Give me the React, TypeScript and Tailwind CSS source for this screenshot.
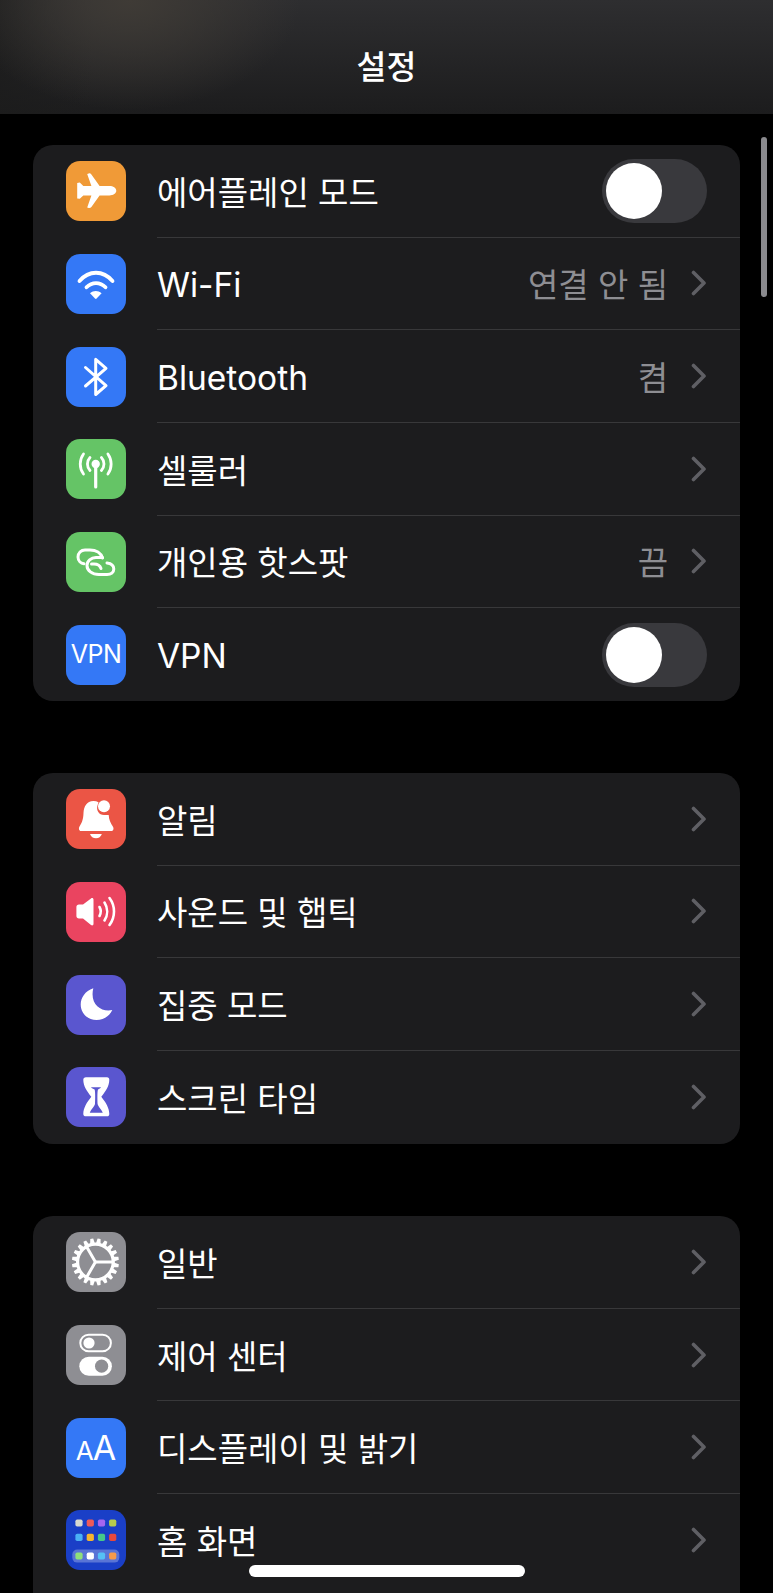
import React from "react";

const Chevron = () => (
  <svg width="16" height="26" viewBox="0 0 16 26" className="shrink-0 mr-[-1px]" fill="none">
    <path d="M2.5 2.5 L13 13 L2.5 23.5" stroke="#5f5f64" strokeWidth="3.6" strokeLinecap="round" strokeLinejoin="round" />
  </svg>
);

const Toggle = () => (
  <div className="relative w-[105px] h-[64px] rounded-full bg-[#39393d] shrink-0 mr-[-1px]">
    <div className="absolute left-[4px] top-[4px] w-[56px] h-[56px] rounded-full bg-white" />
  </div>
);

const Svg = ({ children }: { children: React.ReactNode }) => (
  <svg width="60" height="60" viewBox="0 0 60 60" fill="none">
    {children}
  </svg>
);

const Plane = () => (
  <Svg>
    <path
      fill="#fff"
      d="M50.3 29.7C50.3 27 47 25 43.5 25H33.6L25.4 13.4C24.8 12.6 23.8 12.2 22.8 12.4L21.2 13L25.4 25H17.3L13.8 21.6L11.2 22V37.4L13.8 37.8L17.3 34.4H25.4L21.2 46.4L22.8 47C23.8 47.2 24.8 46.8 25.4 46L33.6 34.4H43.5C47 34.4 50.3 32.4 50.3 29.7Z"
    />
  </Svg>
);
const Wifi = () => (
  <Svg>
    <path d="M13.5 27C23 16 37 16 46.5 27" stroke="#fff" strokeWidth="3.8" strokeLinecap="round" />
    <path d="M20.5 33.3C26 27.6 34 27.6 39.5 33.3" stroke="#fff" strokeWidth="3.8" strokeLinecap="round" />
    <path fill="#fff" d="M24 39.2C27.5 36.4 32 36.4 35.6 39.2L30.6 44.6C30.2 45 29.4 45 29 44.6Z" />
  </Svg>
);
const Bluetooth = () => (
  <Svg>
    <path
      d="M19.5 20.5L40 38.7L29.7 47.5V12.3L40 21.3L19.5 39"
      stroke="#fff"
      strokeWidth="3"
      strokeLinecap="round"
      strokeLinejoin="round"
    />
  </Svg>
);
const Antenna = () => (
  <Svg>
    <path d="M29.7 25V48" stroke="#fff" strokeWidth="3.2" strokeLinecap="round" />
    <circle cx="29.7" cy="25" r="4.2" fill="#fff" />
    <g stroke="#fff" strokeWidth="2.8" strokeLinecap="round">
      <path d="M24 18.5A9.5 9.5 0 0 0 24 31.5" />
      <path d="M35.4 18.5A9.5 9.5 0 0 1 35.4 31.5" />
      <path d="M17.5 15A17 17 0 0 0 17.5 35" />
      <path d="M41.9 15A17 17 0 0 1 41.9 35" />
    </g>
  </Svg>
);
const Hotspot = () => (
  <Svg>
    <g stroke="#fff" strokeWidth="3" strokeLinecap="round" strokeLinejoin="round">
      <path d="M36.5 26C35 21 30 18 24 18H19C15 18 12 21 12 25C12 29 15 31.5 18 31.8" />
      <path d="M25.5 32H28C31.5 32 34 33.5 35 36.5" />
      <path d="M41 31C45 31.5 47.8 33.5 47.8 37C47.8 40.5 45 42.5 41 42.5H33C26 42.5 21 38.5 21 33.5C21 29 25 25.5 30 25.5H36.5" />
    </g>
  </Svg>
);
const Vpn = () => (
  <span className="text-white text-[25px] leading-none tracking-[-0.5px] font-['Inter',sans-serif]">VPN</span>
);
const Bell = () => (
  <Svg>
    <path
      fill="#fff"
      d="M27.5 12C20.5 12 17.8 18 17.5 24C17.3 31 15.5 34.5 13.5 37.5C12.4 39.3 13 42 15 42H45.5C47.5 42 48 39.3 47 37.7C44.5 34 43 31 42.7 26H38C33 26 29.5 21 31.8 15.5L32.5 13.2C31 12.4 29.3 12 27.5 12Z"
    />
    <path fill="#fff" d="M24 45H35.8C35 47.8 32.7 49.3 30 49.3C27.2 49.3 24.8 47.8 24 45Z" />
    <circle cx="38" cy="17.2" r="6" fill="#fff" />
  </Svg>
);
const Sound = () => (
  <Svg>
    <path
      fill="#fff"
      d="M10.4 25C10.4 23.5 11.4 22.5 13 22.5H17L25 16.5C26.3 15.6 27.5 16.3 27.5 17.8V41.7C27.5 43.2 26.3 44 25 43L17 36.5H13C11.4 36.5 10.4 35.5 10.4 34Z"
    />
    <g stroke="#fff" strokeWidth="2.6" strokeLinecap="round">
      <path d="M33.5 25C35.2 28 35.2 31 33.5 34" />
      <path d="M38.5 20.5C42 26 42 33 38.5 38.5" />
      <path d="M43.5 16C49.5 24 49.5 35 43.5 43" />
    </g>
  </Svg>
);
const Moon = () => (
  <Svg>
    <path
      fill="#fff"
      d="M27.3 13.3C19 16 14.7 23 14.7 29.5C14.7 38.5 22 45 30.5 45C37.5 45 43.5 41 46.3 35C35 37.5 23.5 29 27.3 13.3Z"
    />
  </Svg>
);
const Hourglass = () => (
  <Svg>
    <path
      fill="#fff"
      d="M20 10.3H41C42.5 10.3 43.3 11.3 43.3 12.7C43.3 19 39.8 24 35.3 29.8C39.8 35.5 43.3 41 43.3 47C43.3 48.5 42.5 49.3 41 49.3H20C18.3 49.3 17.3 48.5 17.3 47C17.3 41 20.8 35.5 25.3 29.8C20.8 24 17.3 19 17.3 12.7C17.3 11.3 18.3 10.3 20 10.3Z"
    />
    <path
      fill="#5a56cf"
      d="M25 20.3H35C34.4 21.4 33.2 21.6 32 22.6C31.2 24 31.4 34 31.6 37C32.3 40 35 41.5 36.8 45.8H23.8C25.4 41.5 28.2 40 29 37C29.2 34 29.4 24 28.6 22.6C27.4 21.6 25.6 21.4 25 20.3Z"
    />
  </Svg>
);
const Gear = () => (
  <Svg>
    {Array.from({ length: 20 }).map((_, i) => (
      <path
        key={i}
        d="M27.9 6.5H30.9L31.9 12.5H26.9Z"
        fill="#fff"
        transform={`rotate(${i * 18 + 9} 29.4 30)`}
      />
    ))}
    <circle cx="29.4" cy="30" r="17.8" stroke="#fff" strokeWidth="3.2" />
    <g stroke="#fff" strokeWidth="3" strokeLinecap="round">
      <path d="M29.4 30L20.6 14.8" />
      <path d="M29.4 30H47" />
      <path d="M29.4 30L20.6 45.2" />
    </g>
  </Svg>
);
const Toggles = () => (
  <Svg>
    <rect x="14.3" y="9.7" width="30.6" height="16.6" rx="8.3" stroke="#fff" strokeWidth="2" />
    <circle cx="23" cy="18" r="5.6" fill="#fff" />
    <rect x="13.3" y="31.7" width="32.6" height="19" rx="9.5" fill="#fff" />
    <circle cx="35.6" cy="41.2" r="6.6" fill="#8e8e93" />
  </Svg>
);
const AA = () => (
  <div className="flex items-baseline text-white font-['Inter',sans-serif] font-normal leading-none mt-[1px]">
    <span className="text-[26px]">A</span>
    <span className="text-[34px] ml-[-1px]">A</span>
  </div>
);

const homeDots = [
  ["#d8d8d0", 13, 13],
  ["#ef5a5a", 24.3, 13],
  ["#a566f0", 35.5, 13],
  ["#b5cc4c", 46.7, 13],
  ["#4ab0f5", 13, 27.4],
  ["#f5b52f", 24.3, 27.4],
  ["#45c98a", 35.5, 27.4],
  ["#e8483c", 46.7, 27.4],
  ["#8fe07a", 13, 46],
  ["#ffffff", 24.3, 46],
  ["#55c0f5", 35.5, 46],
  ["#f59a4a", 46.7, 46],
] as const;

const Home = () => (
  <Svg>
    <rect x="6.3" y="39.6" width="47" height="13" rx="5" fill="#fff" fillOpacity="0.28" />
    {homeDots.map(([c, x, y], i) => (
      <rect key={i} x={x - 3.6} y={y - 3.6} width="7.2" height="7.2" rx="1.8" fill={c} />
    ))}
  </Svg>
);

type RowT = {
  bg: string;
  icon: React.ReactNode;
  label: string;
  value?: string;
  toggle?: boolean;
  latin?: boolean;
};

const Row = ({ r, last }: { r: RowT; last: boolean }) => (
  <div className="flex items-center h-[92.67px] pl-[33px]">
    <div className={`w-[60px] h-[60px] rounded-[14px] flex items-center justify-center shrink-0 overflow-hidden ${r.bg}`}>
      {r.icon}
    </div>
    <div
      className={`flex-1 h-full ml-[31px] pr-[34px] flex items-center justify-between ${
        last ? "" : "border-b border-[#38383a]"
      }`}
    >
      <span className={`${r.latin ? "text-[33.5px]" : "text-[33px]"} leading-none text-white mt-[5px]`}>{r.label}</span>
      {r.toggle ? (
        <Toggle />
      ) : (
        <div className="flex items-center gap-[23px]">
          {r.value && <span className="text-[33px] leading-none text-[#8e8e93] mt-[5px]">{r.value}</span>}
          <Chevron />
        </div>
      )}
    </div>
  </div>
);

const Group = ({ rows, className = "" }: { rows: RowT[]; className?: string }) => (
  <div className={`ml-[33px] w-[707px] bg-[#1c1c1e] rounded-[20px] overflow-hidden ${className}`}>
    {rows.map((r, i) => (
      <Row key={r.label} r={r} last={i === rows.length - 1} />
    ))}
  </div>
);

const g1: RowT[] = [
  { bg: "bg-[#f09a37]", icon: <Plane />, label: "에어플레인 모드", toggle: true },
  { bg: "bg-[#3478f6]", icon: <Wifi />, label: "Wi-Fi", value: "연결 안 됨", latin: true },
  { bg: "bg-[#3478f6]", icon: <Bluetooth />, label: "Bluetooth", value: "켬", latin: true },
  { bg: "bg-[#65c466]", icon: <Antenna />, label: "셀룰러" },
  { bg: "bg-[#65c466]", icon: <Hotspot />, label: "개인용 핫스팟", value: "끔" },
  { bg: "bg-[#3478f6]", icon: <Vpn />, label: "VPN", toggle: true, latin: true },
];
const g2: RowT[] = [
  { bg: "bg-[#eb5545]", icon: <Bell />, label: "알림" },
  { bg: "bg-[#ea4460]", icon: <Sound />, label: "사운드 및 햅틱" },
  { bg: "bg-[#5a56cf]", icon: <Moon />, label: "집중 모드" },
  { bg: "bg-[#5a56cf]", icon: <Hourglass />, label: "스크린 타임" },
];
const g3: RowT[] = [
  { bg: "bg-[#8e8e93]", icon: <Gear />, label: "일반" },
  { bg: "bg-[#8e8e93]", icon: <Toggles />, label: "제어 센터" },
  { bg: "bg-[#3478f6]", icon: <AA />, label: "디스플레이 및 밝기" },
  { bg: "bg-[#1a3fc7]", icon: <Home />, label: "홈 화면" },
];

export default function App() {
  return (
    <div className="relative w-[773px] h-[1593px] overflow-hidden bg-black font-['Inter','Noto_Sans_CJK_KR',sans-serif]">
      <header className="h-[114px] flex items-center justify-center pt-[22px] bg-[radial-gradient(ellipse_170px_110px_at_130px_0px,#3f3b36_0%,rgba(63,59,54,0)_100%),linear-gradient(to_right,rgba(28,28,28,0.8)_0%,rgba(28,28,28,0)_12%),linear-gradient(to_bottom,#2e2e30_0%,#1c1c1d_100%)]">
        <h1 className="text-[32.5px] leading-none font-medium text-white">설정</h1>
      </header>
      <Group rows={g1} className="mt-[31px]" />
      <Group rows={g2} className="mt-[72px]" />
      <Group rows={g3} className="mt-[72.5px] pb-[40px]" />
      <div className="absolute left-[761px] top-[137px] w-[6px] h-[160px] rounded-full bg-[#8a8a8e]" />
      <div className="absolute left-[249px] top-[1565px] w-[276px] h-[12px] rounded-full bg-white" />
    </div>
  );
}
